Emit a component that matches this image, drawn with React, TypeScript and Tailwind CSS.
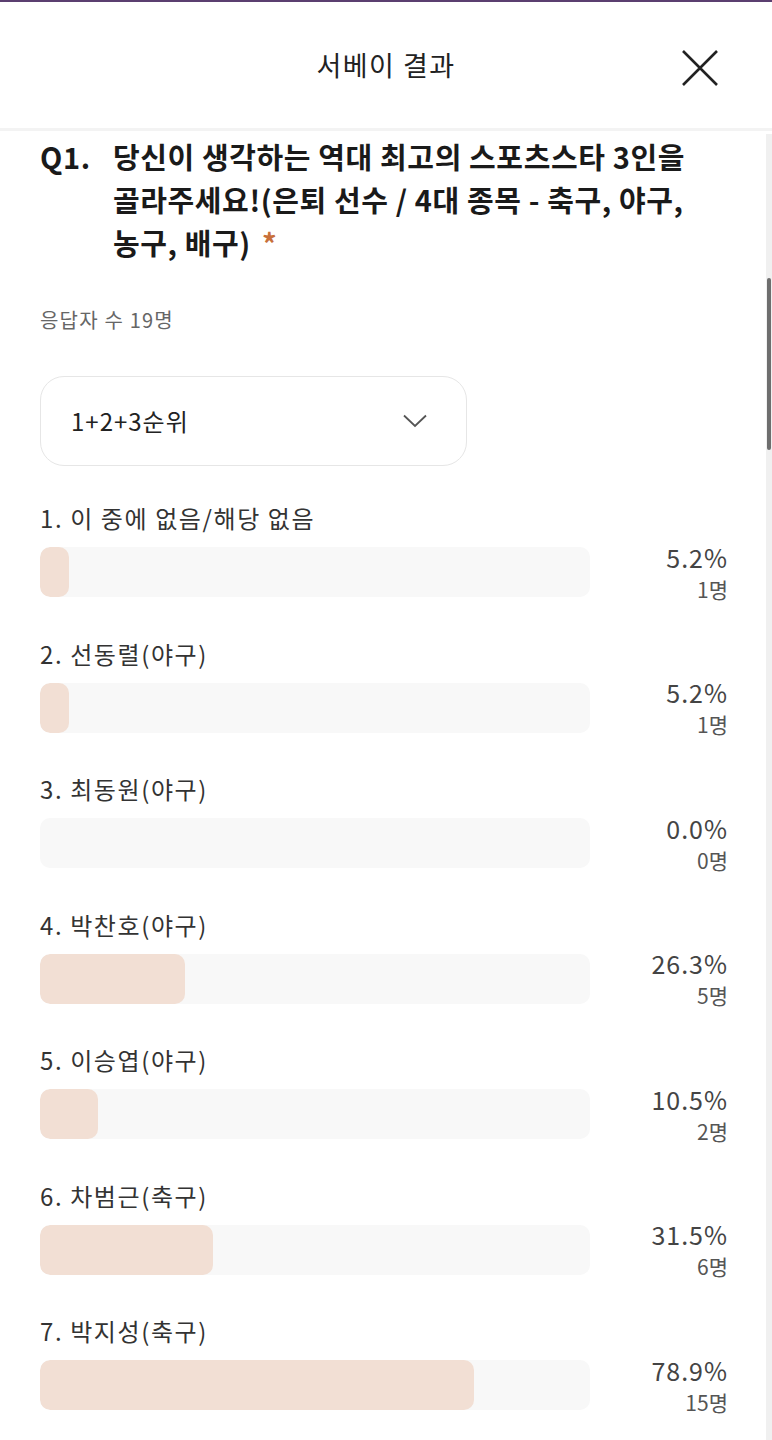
const results = [
  { label: '1. 이 중에 없음/해당 없음', pct: 5.2, count: 1 },
  { label: '2. 선동렬(야구)', pct: 5.2, count: 1 },
  { label: '3. 최동원(야구)', pct: 0.0, count: 0 },
  { label: '4. 박찬호(야구)', pct: 26.3, count: 5 },
  { label: '5. 이승엽(야구)', pct: 10.5, count: 2 },
  { label: '6. 차범근(축구)', pct: 31.5, count: 6 },
  { label: '7. 박지성(축구)', pct: 78.9, count: 15 },
];

export default function App() {
  return (
    <div
      className="relative w-full h-[1440px] overflow-hidden bg-white"
      style={{ fontFamily: '"Noto Sans CJK KR", "Noto Sans", sans-serif' }}
    >
      {/* status strip */}
      <div className="h-[2px] bg-[#5b3f70]" />

      {/* Header */}
      <div className="relative flex h-[129px] items-center justify-center border-b-[3px] border-[#f3f3f3]">
        <h1 className="text-[27px] tracking-[1.5px] text-[#222]">서베이 결과</h1>
        <button className="absolute right-[54px] top-[48px]">
          <svg width="36" height="36" viewBox="0 0 36 36" fill="none" stroke="#222" strokeWidth="2.6">
            <path d="M1 1L35 35M35 1L1 35" />
          </svg>
        </button>
      </div>

      <div className="px-[40px] pt-[4px]">
        {/* Question */}
        <div className="flex text-[29px] font-bold leading-[43px] tracking-[0.6px] text-[#1a1a1a]">
          <div className="w-[73px] shrink-0">Q1.</div>
          <div className="whitespace-nowrap">
            당신이 생각하는 역대 최고의 스포츠스타 3인을
            <br />
            골라주세요!(은퇴 선수 / 4대 종목 - 축구, 야구,
            <br />
            농구, 배구) <span className="ml-[4px] text-[#c8703a]">*</span>
          </div>
        </div>

        <p className="mt-[43px] text-[20px] leading-[26px] tracking-[1.2px] text-[#666]">응답자 수 19명</p>

        {/* Dropdown */}
        <div className="mt-[43px] flex h-[90px] w-[427px] items-center justify-between rounded-[24px] border border-[#e6e6e6] pl-[30px] pr-[39px]">
          <span className="text-[24px] tracking-[1px] text-[#222]">1+2+3순위</span>
          <svg width="24" height="14" viewBox="0 0 24 14" fill="none" stroke="#555" strokeWidth="1.8">
            <path d="M1 1.5L12 12L23 1.5" />
          </svg>
        </div>

        {/* Results */}
        <div className="mt-[37px] flex flex-col gap-[41.5px]">
          {results.map((r) => (
            <div key={r.label}>
              <div className="text-[24px] leading-[30px] tracking-[1.6px] text-[#333]">{r.label}</div>
              <div className="mt-[14px] flex h-[50px] items-center">
                <div className="h-[50px] w-[550px] overflow-hidden rounded-[10px] bg-[#f8f8f8]">
                  <div
                    className="h-full rounded-[10px] bg-[#f2dfd4]"
                    style={{ width: `${r.pct}%` }}
                  />
                </div>
                <div className="flex flex-1 flex-col items-end gap-[5px] pr-[4px]">
                  <span className="text-[25px] leading-[28px] tracking-[1px] text-[#444]">{r.pct.toFixed(1)}%</span>
                  <span className="text-[21px] leading-[26px] text-[#555]">{r.count}명</span>
                </div>
              </div>
            </div>
          ))}
        </div>
      </div>

      {/* scrollbar */}
      <div className="absolute bottom-0 right-0 top-[134px] w-[6px] bg-[#f0f0f0]">
        <div className="absolute right-[1px] top-[144px] h-[172px] w-[4px] rounded-full bg-[#6e6e6e]" />
      </div>
    </div>
  );
}
